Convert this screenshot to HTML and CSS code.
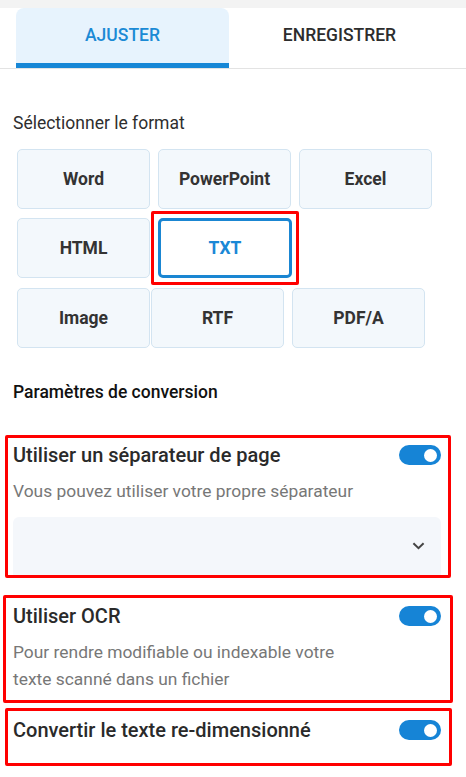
FILE: index.html
```html
<!DOCTYPE html>
<html lang="fr">
<head>
<meta charset="utf-8">
<link rel="stylesheet" href="styles.css">
</head>
<body>
<div class="topstrip"></div>
<div class="tabs">
  <div class="tab active">AJUSTER</div>
  <div class="tab">ENREGISTRER</div>
</div>
<div class="content">
  <div class="label">Sélectionner le format</div>
  <div class="row r1">
    <div class="fmt">Word</div>
    <div class="fmt">PowerPoint</div>
    <div class="fmt">Excel</div>
  </div>
  <div class="row r2">
    <div class="fmt">HTML</div>
    <div class="mark">
      <div class="fmt sel">TXT</div>
    </div>
  </div>
  <div class="row r3">
    <div class="fmt">Image</div>
    <div class="fmt rtf">RTF</div>
    <div class="fmt pdfa">PDF/A</div>
  </div>
  <div class="label params">Paramètres de conversion</div>
</div>
<div class="opt o1">
  <div class="opt-head">
    <div class="opt-title">Utiliser un séparateur de page</div>
    <div class="toggle"><span class="knob"></span></div>
  </div>
  <div class="opt-desc">Vous pouvez utiliser votre propre séparateur</div>
  <div class="select">
    <svg width="13" height="8" viewBox="0 0 13 8"><path d="M1.4 1.3 L6.5 6.2 L11.6 1.3" fill="none" stroke="#444" stroke-width="2"/></svg>
  </div>
</div>
<div class="opt o2">
  <div class="opt-head">
    <div class="opt-title">Utiliser OCR</div>
    <div class="toggle"><span class="knob"></span></div>
  </div>
  <div class="opt-desc two">Pour rendre modifiable ou indexable votre<br>texte scanné dans un fichier</div>
</div>
<div class="opt o3">
  <div class="opt-head">
    <div class="opt-title">Convertir le texte re-dimensionné</div>
    <div class="toggle"><span class="knob"></span></div>
  </div>
</div>
</body>
</html>
```
FILE: styles.css
```css
* { box-sizing: border-box; }
body {
  margin: 0;
  background: #fff;
  font-family: Roboto, "Liberation Sans", sans-serif;
  color: #333;
  width: 466px;
  overflow: hidden;
}
.topstrip {
  height: 8px;
  background: #f3f3f3;
}
.tabs {
  display: flex;
  padding-left: 16px;
  border-bottom: 1px solid #e3e3e3;
}
.tab {
  height: 60px;
  display: flex;
  align-items: center;
  justify-content: center;
  font-size: 17.5px;
  font-weight: 500;
  color: #2d2d2d;
  width: 221px;
  padding-bottom: 6px;
}
.tab.active {
  width: 213px;
  background: #e7f3fd;
  color: #1b8ad5;
  border-radius: 8px 8px 0 0;
  border-bottom: 5px solid #1787d6;
  padding-bottom: 1px;
}
.content {
  padding: 0 0 0 17px;
}
.label {
  font-size: 17.5px;
  line-height: 20px;
  color: #2e2e2e;
  margin: 44px 0 0 -4px;
}
.row {
  display: flex;
  gap: 8px;
}
.r1 { margin-top: 16px; }
.r2 { margin-top: 9px; gap: 1px; }
.r3 { margin-top: 10px; }
.fmt {
  width: 133px;
  height: 60px;
  display: flex;
  align-items: center;
  justify-content: center;
  background: #f3f8fc;
  border: 1px solid #d3e4f1;
  border-radius: 5px;
  font-size: 17.5px;
  font-weight: 700;
  color: #333;
}
.mark {
  margin: -7px 0;
  border: 3px solid #f00;
  border-radius: 2px;
  padding: 4px;
}
.fmt.sel {
  width: 134px;
  background: #fff;
  border: 3px solid #1a86d2;
  color: #1a88d6;
}
.fmt.rtf { margin-left: -7px; }
.params {
  margin-top: 34px;
  color: #111;
  font-weight: 500;
}
.opt {
  border: 3px solid #f00;
  border-radius: 2px;
}
.opt-head {
  display: flex;
  justify-content: space-between;
  align-items: center;
}
.opt-title {
  font-size: 20px;
  line-height: 24px;
  font-weight: 500;
  color: #2a2a2a;
}
.toggle {
  width: 42px;
  height: 20px;
  border-radius: 10px;
  background: #1684d6;
  display: flex;
  align-items: center;
  justify-content: flex-end;
  padding-right: 4px;
}
.knob {
  width: 13px;
  height: 13px;
  border-radius: 50%;
  background: #fff;
}
.opt-desc {
  font-size: 17.4px;
  line-height: 20px;
  color: #777;
}
.o1 {
  margin: 33px 0 0 5px;
  width: 446px;
  height: 143px;
  padding: 5px 7px 0 5px;
  overflow: hidden;
}
.o1 .opt-desc { margin-top: 14px; }
.select {
  margin-top: 16px;
  height: 60px;
  background: #f4f7fb;
  border-radius: 6px 6px 0 0;
  display: flex;
  justify-content: flex-end;
  align-items: center;
  padding-right: 16px;
  padding-bottom: 2px;
}
.o2 {
  margin: 17px 0 0 3px;
  width: 450px;
  height: 108px;
  padding: 6px 9px 0 7px;
}
.opt-desc.two {
  margin-top: 11px;
  line-height: 27px;
}
.o3 {
  margin: 5px 0 0 5px;
  width: 447px;
  height: 58px;
  padding: 7px 8px 0 5px;
}
```
